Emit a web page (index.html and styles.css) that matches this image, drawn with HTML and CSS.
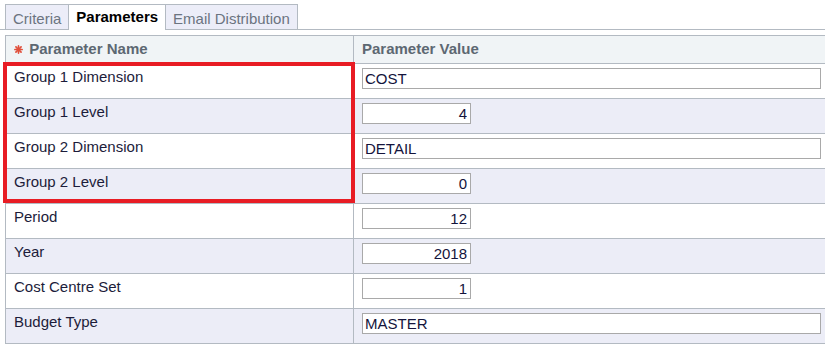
FILE: index.html
```html
<!DOCTYPE html>
<html lang="en">
<head>
    <meta charset="UTF-8">
    <meta name="viewport" content="width=device-width, initial-scale=1.0">
    <title>Report Parameters</title>
    <link rel="stylesheet" href="styles.css">
</head>
<body>
    <div class="tabs">
        <span class="tab">Criteria</span>
        <span class="tab active">Parameters</span>
        <span class="tab">Email Distribution</span>
    </div>

    <div class="params">
        <table class="param-table">
            <tr>
                <th class="name-col">
                    <svg class="req" width="9" height="9" viewBox="0 0 8 8">
                        <g stroke="#e0503c" stroke-width="1.5" stroke-linecap="round">
                            <line x1="4" y1="0.8" x2="4" y2="7.2"/>
                            <line x1="0.8" y1="4" x2="7.2" y2="4"/>
                            <line x1="1.7" y1="1.7" x2="6.3" y2="6.3"/>
                            <line x1="6.3" y1="1.7" x2="1.7" y2="6.3"/>
                        </g>
                    </svg>
                    Parameter Name
                </th>
                <th>Parameter Value</th>
            </tr>
            <tr>
                <td>Group 1 Dimension</td>
                <td><input class="wide" type="text" value="COST"></td>
            </tr>
            <tr>
                <td>Group 1 Level</td>
                <td><input class="num" type="text" value="4"></td>
            </tr>
            <tr>
                <td>Group 2 Dimension</td>
                <td><input class="wide" type="text" value="DETAIL"></td>
            </tr>
            <tr>
                <td>Group 2 Level</td>
                <td><input class="num" type="text" value="0"></td>
            </tr>
            <tr>
                <td>Period</td>
                <td><input class="num" type="text" value="12"></td>
            </tr>
            <tr>
                <td>Year</td>
                <td><input class="num" type="text" value="2018"></td>
            </tr>
            <tr>
                <td>Cost Centre Set</td>
                <td><input class="num" type="text" value="1"></td>
            </tr>
            <tr>
                <td>Budget Type</td>
                <td><input class="wide" type="text" value="MASTER"></td>
            </tr>
        </table>
        <div class="highlight"></div>
    </div>
</body>
</html>
```

FILE: styles.css
```css
body {
    font-family: "Liberation Sans", Arial, sans-serif;
    font-size: 15px;
    margin: 0;
    background: #fff;
    overflow: hidden;
}
.tabs {
    display: flex;
    margin-top: 4px;
    padding-left: 5px;
    border-bottom: 1px solid #b3bac2;
}
.tab {
    display: block;
    height: 24px;
    line-height: 27px;
    padding: 0 7px;
    border: 1px solid #b3bac2;
    border-bottom: none;
    background: #ecedf8;
    color: #6b7480;
}
.tab + .tab {
    margin-left: -1px;
}
.tab.active {
    background: #fff;
    color: #000;
    font-weight: bold;
    margin-bottom: -1px;
    height: 25px;
    line-height: 24px;
    position: relative;
}
.params {
    position: relative;
    margin: 5px 0 0 5px;
}
.param-table {
    border-collapse: collapse;
    width: 830px;
}
.param-table th,
.param-table td {
    border: 1px solid #b3bac2;
    text-align: left;
    vertical-align: top;
}
.param-table th {
    background: #f0f4f6;
    color: #5d6872;
    font-weight: bold;
    line-height: 16px;
    padding: 5px 8px 6px;
}
.param-table td {
    color: #1c1c3a;
    line-height: 16px;
    padding: 5px 8px 8px;
    height: 21px;
}
.param-table td + td {
    padding-top: 4px;
    padding-bottom: 9px;
}
.param-table .name-col {
    width: 331px;
}
.param-table tr:nth-child(odd) td {
    background: #ecedf7;
}
.req {
    margin-right: 2px;
    vertical-align: 0;
}
input {
    font-family: "Liberation Sans", Arial, sans-serif;
    font-size: 15px;
    color: #14143c;
    height: 21px;
    box-sizing: border-box;
    border: 1px solid #a9a9a9;
    padding: 0 2px;
    margin: 0;
    display: block;
    background: #fff;
}
input.wide {
    width: 459px;
}
input.num {
    width: 109px;
    text-align: right;
    padding-right: 3px;
}
.highlight {
    position: absolute;
    left: -2px;
    top: 27px;
    width: 344px;
    height: 133px;
    border: 4px solid #e81c24;
}
```
